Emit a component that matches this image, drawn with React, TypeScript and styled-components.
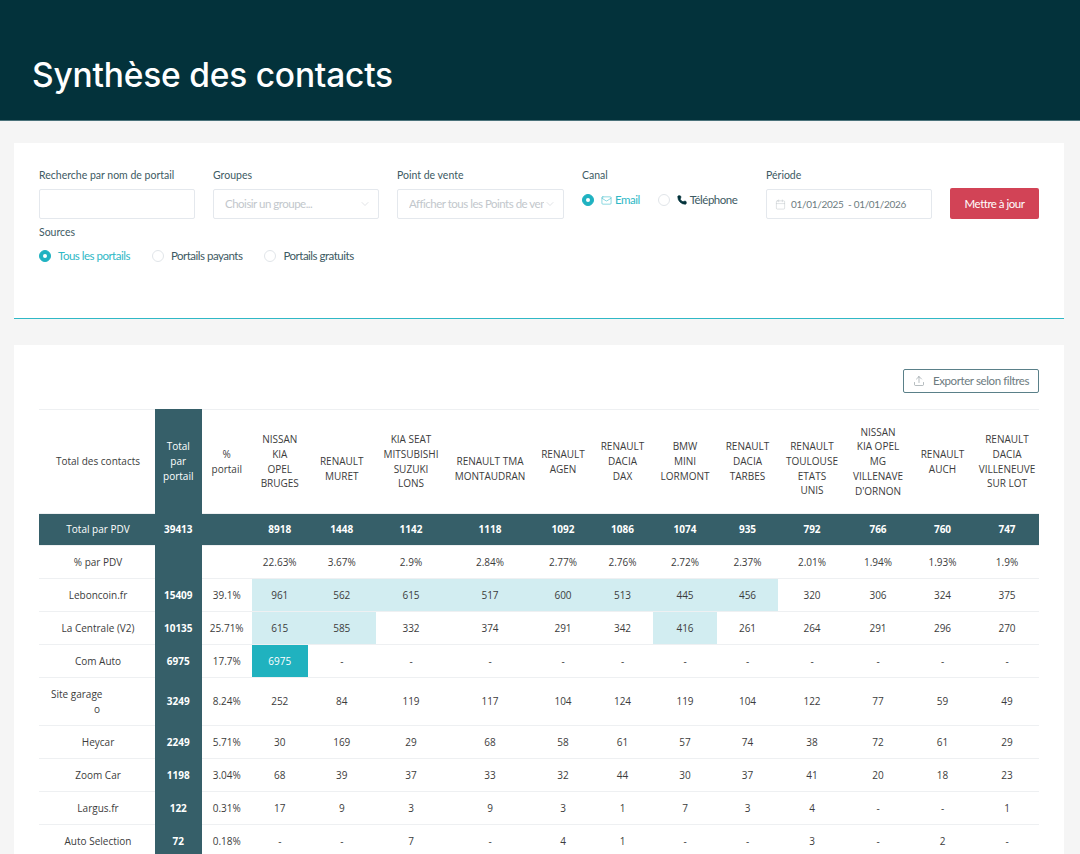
import { createGlobalStyle, styled } from 'styled-components';
import { Calendar, ChevronDown, Mail, Phone, Upload } from 'lucide-react';

const GlobalStyle = createGlobalStyle`
  html, body {
    margin: 0;
    padding: 0;
    background: #f5f5f5;
    overflow: hidden;
  }
  * { box-sizing: border-box; }
`;

const Page = styled.div`
  width: 1080px;
  height: 854px;
  overflow: hidden;
  background: #f5f5f5;
`;

const Banner = styled.header`
  height: 121px;
  background: #03323b;
  border-bottom: 1px solid #4a727a;
  padding: 53px 0 0 32px;
`;

const Title = styled.h1`
  margin: 0;
  font: 500 33.5px/44px Inter, sans-serif;
  letter-spacing: -0.2px;
  color: #fff;
`;

const Card = styled.section`
  margin: 0 16px 0 14px;
  background: #fff;
`;

const FilterCard = styled(Card)`
  margin-top: 22px;
  height: 176px;
  padding: 25px 25px 0;
  border-bottom: 1px solid #2fb8c6;
`;

const FilterRow = styled.div`
  display: flex;
  align-items: flex-start;
`;

const Field = styled.div<{ $width: number }>`
  width: ${({ $width }) => $width}px;
  margin-right: 18px;
  flex: none;
`;

const Label = styled.div`
  font: 400 10.5px/14px Lato, sans-serif;
  color: #3d5a63;
  margin-bottom: 7px;
`;

const Control = styled.div`
  height: 30px;
  border: 1px solid #e4e8ed;
  border-radius: 2px;
  background: #fff;
  display: flex;
  align-items: center;
  padding: 0 7px 0 11px;
  font: 400 11.5px/14px Lato, sans-serif;
  letter-spacing: -0.5px;
  color: #c2c7cc;
  white-space: nowrap;
  overflow: hidden;
`;

const DateControl = styled(Control)`
  padding-left: 8px;
`;

const ControlText = styled.span`
  flex: 1;
  overflow: hidden;
`;

const DateText = styled.span`
  margin-left: 5px;
  font: 400 10px/14px Lato, sans-serif;
  letter-spacing: -0.3px;
  color: #6d7b80;
  white-space: pre;
`;

const RadioRow = styled.div<{ $gap: number }>`
  display: flex;
  align-items: center;
  gap: ${({ $gap }) => $gap}px;
`;

const RadioItem = styled.div<{ $active?: boolean }>`
  display: flex;
  align-items: center;
  gap: 7px;
  font: 400 11.5px/14px Lato, sans-serif;
  letter-spacing: -0.5px;
  color: ${({ $active }) => ($active ? '#2fb8c6' : '#3d5a63')};
  white-space: nowrap;
`;

const RadioDot = styled.span<{ $active?: boolean }>`
  width: 12px;
  height: 12px;
  border-radius: 50%;
  flex: none;
  background: ${({ $active }) => ($active ? '#1fb2c1' : '#fff')};
  border: 1px solid ${({ $active }) => ($active ? '#1fb2c1' : '#e1e5e9')};
  display: flex;
  align-items: center;
  justify-content: center;
  &::after {
    content: '';
    width: 4px;
    height: 4px;
    border-radius: 50%;
    background: ${({ $active }) => ($active ? '#fff' : 'transparent')};
  }
`;

const CanalRow = styled(RadioRow)`
  margin-top: 10px;
  height: 16px;
`;

const ChannelLabel = styled.span`
  display: inline-flex;
  align-items: center;
  gap: 3px;
`;

const UpdateButton = styled.button`
  width: 89px;
  height: 31px;
  margin-top: 20px;
  flex: none;
  border: none;
  border-radius: 2px;
  background: #d24356;
  color: #fff;
  font: 400 11.5px/14px Lato, sans-serif;
  letter-spacing: -0.5px;
  padding: 0;
`;

const SourcesBlock = styled.div`
  margin-top: 6px;
`;

const SourcesLabel = styled(Label)`
  margin-bottom: 10px;
`;

const TableCard = styled(Card)`
  margin-top: 26px;
  padding: 24px 25px 0;
  height: 600px;
`;

const Toolbar = styled.div`
  display: flex;
  justify-content: flex-end;
  height: 40px;
`;

const ExportButton = styled.button`
  width: 136px;
  height: 24px;
  border: 1px solid #5a8089;
  border-radius: 2px;
  background: #fff;
  display: flex;
  align-items: center;
  justify-content: center;
  gap: 8px;
  padding: 0;
  font: 400 11.5px/14px Lato, sans-serif;
  letter-spacing: -0.4px;
  color: #6d7b80;
`;

const Table = styled.table`
  width: 1000px;
  table-layout: fixed;
  border-collapse: collapse;
  font: 400 10px/14.7px 'Open Sans', sans-serif;
  color: #3c3c3c;
  text-align: center;
`;

const Row = styled.tr<{ $height: number; $dark?: boolean }>`
  height: ${({ $height }) => $height}px;
  border-top: 1px solid #eef0f2;
  background: ${({ $dark }) => ($dark ? '#365f69' : 'transparent')};
  color: ${({ $dark }) => ($dark ? '#fff' : '#3c3c3c')};
`;

const Cell = styled.td<{ $tone?: 'light' | 'strong' }>`
  padding: 0 1px;
  font-weight: 400;
  background: ${({ $tone }) =>
    $tone === 'light' ? '#d2edf1' : $tone === 'strong' ? '#20b2bf' : 'transparent'};
  color: ${({ $tone }) => ($tone === 'strong' ? '#fff' : 'inherit')};
`;

const NameCell = styled(Cell)`
  padding: 0 0 0 2px;
`;

const DealerCell = styled(Cell)<{ $lowered: boolean }>`
  padding-top: ${({ $lowered }) => ($lowered ? '14px' : '0')};
`;

const TotalCell = styled.td`
  padding: 0 1px;
  background: #365f69;
  border-top: 1px solid #365f69;
  color: #fff;
  font-weight: 700;
`;

const HeadTotal = styled(TotalCell)`
  font-weight: 400;
`;

const BoldCell = styled.td`
  padding: 0;
  font-weight: 700;
`;

const SiteName = styled.div`
  width: 52px;
  margin-left: 10px;
  text-align: left;
  white-space: nowrap;
`;

const SiteTail = styled.div`
  text-align: center;
  width: 116px;
  margin-left: -12px;
`;

const widths = [116, 46.5, 50.5, 55.5, 68.5, 70, 88, 58, 61, 64, 61, 68, 64, 65, 64];

const dealers: { lines: string[]; lowered?: boolean }[] = [
  { lines: ['NISSAN', 'KIA', 'OPEL', 'BRUGES'] },
  { lines: ['RENAULT', 'MURET'], lowered: true },
  { lines: ['KIA SEAT', 'MITSUBISHI', 'SUZUKI', 'LONS'] },
  { lines: ['RENAULT TMA', 'MONTAUDRAN'], lowered: true },
  { lines: ['RENAULT', 'AGEN'] },
  { lines: ['RENAULT', 'DACIA', 'DAX'] },
  { lines: ['BMW', 'MINI', 'LORMONT'] },
  { lines: ['RENAULT', 'DACIA', 'TARBES'] },
  { lines: ['RENAULT', 'TOULOUSE', 'ETATS', 'UNIS'], lowered: true },
  { lines: ['NISSAN', 'KIA OPEL', 'MG', 'VILLENAVE', "D'ORNON"] },
  { lines: ['RENAULT', 'AUCH'] },
  { lines: ['RENAULT', 'DACIA', 'VILLENEUVE', 'SUR LOT'] },
];

const totals = ['8918', '1448', '1142', '1118', '1092', '1086', '1074', '935', '792', '766', '760', '747'];
const shares = ['22.63%', '3.67%', '2.9%', '2.84%', '2.77%', '2.76%', '2.72%', '2.37%', '2.01%', '1.94%', '1.93%', '1.9%'];

type Portal = {
  name: string;
  total: string;
  share: string;
  height: number;
  values: string[];
  light?: number[];
  strong?: boolean;
};

const portals: Portal[] = [
  { name: 'Leboncoin.fr', total: '15409', share: '39.1%', height: 33, light: [0, 1, 2, 3, 4, 5, 6, 7],
    values: ['961', '562', '615', '517', '600', '513', '445', '456', '320', '306', '324', '375'] },
  { name: 'La Centrale (V2)', total: '10135', share: '25.71%', height: 33, light: [0, 1, 6],
    values: ['615', '585', '332', '374', '291', '342', '416', '261', '264', '291', '296', '270'] },
  { name: 'Com Auto', total: '6975', share: '17.7%', height: 33, strong: true,
    values: ['6975', '-', '-', '-', '-', '-', '-', '-', '-', '-', '-', '-'] },
  { name: 'Site garage', total: '3249', share: '8.24%', height: 48,
    values: ['252', '84', '119', '117', '104', '124', '119', '104', '122', '77', '59', '49'] },
  { name: 'Heycar', total: '2249', share: '5.71%', height: 33,
    values: ['30', '169', '29', '68', '58', '61', '57', '74', '38', '72', '61', '29'] },
  { name: 'Zoom Car', total: '1198', share: '3.04%', height: 33,
    values: ['68', '39', '37', '33', '32', '44', '30', '37', '41', '20', '18', '23'] },
  { name: 'Largus.fr', total: '122', share: '0.31%', height: 33,
    values: ['17', '9', '3', '9', '3', '1', '7', '3', '4', '-', '-', '1'] },
  { name: 'Auto Selection', total: '72', share: '0.18%', height: 33,
    values: ['-', '-', '7', '-', '4', '1', '-', '-', '3', '-', '2', '-'] },
];

function toneFor(portal: Portal, index: number): 'light' | 'strong' | undefined {
  if (portal.strong && index === 0) return 'strong';
  if (portal.light?.includes(index)) return 'light';
  return undefined;
}

export default function App() {
  return (
    <Page>
      <GlobalStyle />
      <Banner>
        <Title>Synthèse des contacts</Title>
      </Banner>

      <FilterCard>
        <FilterRow>
          <Field $width={156}>
            <Label>Recherche par nom de portail</Label>
            <Control />
          </Field>
          <Field $width={166}>
            <Label>Groupes</Label>
            <Control>
              <ControlText>Choisir un groupe...</ControlText>
              <ChevronDown size={12} strokeWidth={1} color="#c2c7cc" />
            </Control>
          </Field>
          <Field $width={167}>
            <Label>Point de vente</Label>
            <Control>
              <ControlText>Afficher tous les Points de vente</ControlText>
              <ChevronDown size={12} strokeWidth={1} color="#c2c7cc" />
            </Control>
          </Field>
          <Field $width={166}>
            <Label>Canal</Label>
            <CanalRow $gap={18}>
              <RadioItem $active>
                <RadioDot $active />
                <ChannelLabel>
                  <Mail size={11} strokeWidth={1.2} />
                  Email
                </ChannelLabel>
              </RadioItem>
              <RadioItem>
                <RadioDot />
                <ChannelLabel>
                  <Phone size={10} fill="#03323b" color="#03323b" />
                  Téléphone
                </ChannelLabel>
              </RadioItem>
            </CanalRow>
          </Field>
          <Field $width={166}>
            <Label>Période</Label>
            <DateControl>
              <Calendar size={11} strokeWidth={1} color="#b9bfc4" style={{ flex: 'none' }} />
              <DateText>01/01/2025  - 01/01/2026</DateText>
            </DateControl>
          </Field>
          <UpdateButton>Mettre à jour</UpdateButton>
        </FilterRow>
        <SourcesBlock>
          <SourcesLabel>Sources</SourcesLabel>
          <RadioRow $gap={22}>
            <RadioItem $active>
              <RadioDot $active />
              Tous les portails
            </RadioItem>
            <RadioItem>
              <RadioDot />
              Portails payants
            </RadioItem>
            <RadioItem>
              <RadioDot />
              Portails gratuits
            </RadioItem>
          </RadioRow>
        </SourcesBlock>
      </FilterCard>

      <TableCard>
        <Toolbar>
          <ExportButton>
            <Upload size={12} strokeWidth={1} color="#6d7b80" />
            Exporter selon filtres
          </ExportButton>
        </Toolbar>
        <Table>
          <colgroup>
            {widths.map((width, index) => (
              <col key={index} style={{ width }} />
            ))}
          </colgroup>
          <tbody>
            <Row $height={104}>
              <NameCell>Total des contacts</NameCell>
              <HeadTotal>
                Total
                <br />
                par
                <br />
                portail
              </HeadTotal>
              <Cell>
                %
                <br />
                portail
              </Cell>
              {dealers.map(({ lines, lowered }) => (
                <DealerCell key={lines.join(' ')} $lowered={!!lowered}>
                  {lines.map((line) => (
                    <div key={line}>{line}</div>
                  ))}
                </DealerCell>
              ))}
            </Row>
            <Row $height={32} $dark>
              <NameCell>Total par PDV</NameCell>
              <TotalCell>39413</TotalCell>
              <Cell />
              {totals.map((value) => (
                <BoldCell key={value}>{value}</BoldCell>
              ))}
            </Row>
            <Row $height={33}>
              <NameCell>% par PDV</NameCell>
              <TotalCell />
              <Cell />
              {shares.map((value) => (
                <Cell key={value}>{value}</Cell>
              ))}
            </Row>
            {portals.map((portal) => (
              <Row key={portal.name} $height={portal.height}>
                <NameCell>
                  {portal.name === 'Site garage' ? (
                    <SiteName>
                      {portal.name}
                      <SiteTail>o</SiteTail>
                    </SiteName>
                  ) : (
                    portal.name
                  )}
                </NameCell>
                <TotalCell>{portal.total}</TotalCell>
                <Cell>{portal.share}</Cell>
                {portal.values.map((value, index) => (
                  <Cell key={index} $tone={toneFor(portal, index)}>
                    {value}
                  </Cell>
                ))}
              </Row>
            ))}
          </tbody>
        </Table>
      </TableCard>
    </Page>
  );
}
